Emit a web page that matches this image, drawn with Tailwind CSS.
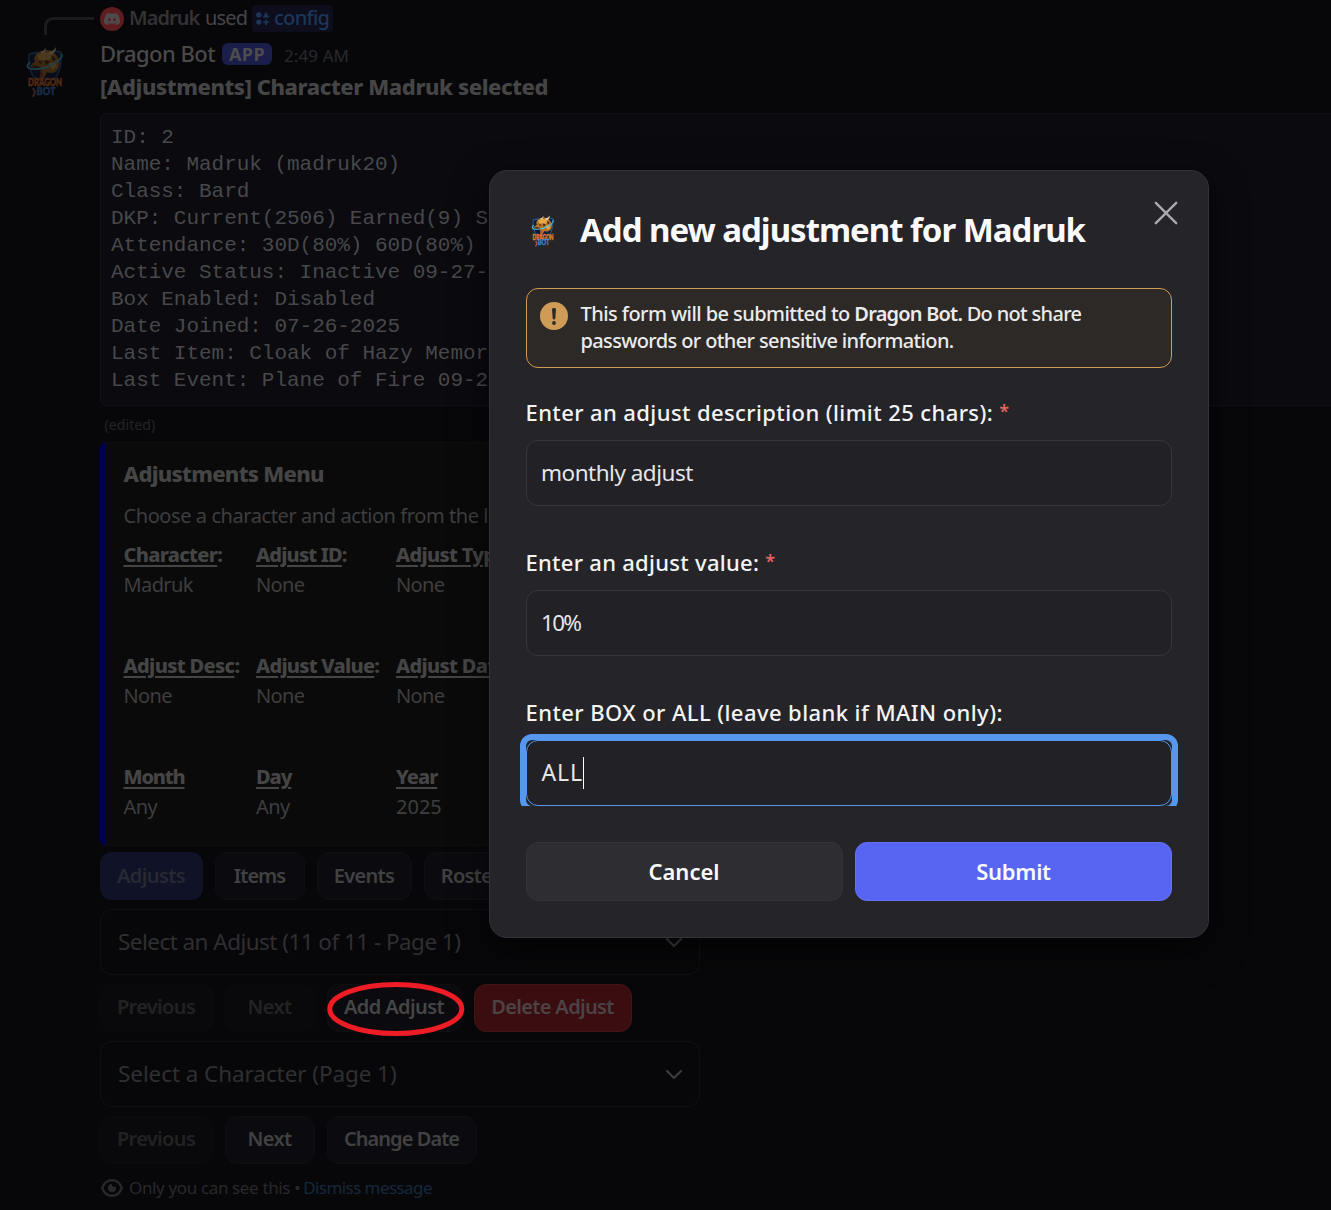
<!DOCTYPE html>
<html lang="en">
<head>
<meta charset="utf-8">
<title>Dragon Bot</title>
<script src="https://cdn.jsdelivr.net/npm/@tailwindcss/browser@4"></script>
</head>
<body class="overflow-hidden bg-[#070709] font-['Noto_Sans','Open_Sans',sans-serif]">
<svg width="0" height="0" class="absolute">
  <defs>
    <symbol id="dragon" viewBox="0 0 38 52">
      <path d="M3 8 L12 6 M28 5 L35 6 Q36 24 29 33 L9 33 Q2 24 3 8Z" fill="#0d1c3f" stroke="#2b5a94" stroke-width="1.6"/>
      <path d="M8 12 Q10 6 17 5 Q24 2 30 9 Q36 15 32 23 Q28 29 21 26 L18 32 L14 33 L15 24 L5 21 Q4 18 9 16Z" fill="#b87426"/>
      <path d="M11 9 Q19 4 27 9 L24 14 L13 14Z M23 17 Q30 16 31 21 L26 24Z" fill="#e6a848"/>
      <path d="M14 5 Q18 6 20 1 Q20 6 17 8 M22 6 Q27 6 30 1 Q30 7 25 9" fill="#e8d3a0"/>
      <path d="M6 19 L15 21 L14 25 L9 24Z M19 14 L24 16 L20 19Z M12 15 L17 16 L14 18Z M25 9 L30 13 L27 15Z" fill="#4a2413"/>
      <path d="M4 16 Q-2 22 6 23 Q18 24 29 17 Q38 11 35 8" fill="none" stroke="#4fc4dc" stroke-width="1.7"/>
      <path d="M15 25 Q18 30 13 34" fill="none" stroke="#b8472a" stroke-width="2.4"/>
      <text x="19" y="40" text-anchor="middle" textLength="34" lengthAdjust="spacingAndGlyphs" font-family="Lato, sans-serif" font-weight="900" font-size="10.5" fill="#f0772a" stroke="#f0772a" stroke-width=".5">DRAGON</text>
      <text x="20" y="48.5" text-anchor="middle" textLength="19" lengthAdjust="spacingAndGlyphs" font-family="Lato, sans-serif" font-weight="900" font-size="10.5" fill="#3f7fd0" stroke="#3f7fd0" stroke-width=".5">BOT</text>
      <path d="M7 42 L9 46 L7 51" fill="none" stroke="#a05a4c" stroke-width="2.2"/>
    </symbol>
  </defs>
</svg>

<main class="relative h-[1210px] w-[1331px] overflow-hidden whitespace-nowrap">
  <div class="flex">
    <!-- gutter: reply spine and avatar -->
    <aside class="flex w-[100px] shrink-0 flex-col">
      <svg class="h-[45px] w-[100px]" viewBox="0 0 100 45" fill="none" stroke="#1b1b1d" stroke-width="3"><path d="M45.5 35V27Q45.5 18.5 54 18.5H94"/></svg>
      <svg class="ml-[26px] h-[54px] w-[38px] opacity-30"><use href="#dragon"/></svg>
    </aside>

    <section class="flex w-[1260px] shrink-0 flex-col pt-[5px]">
      <div class="flex h-[27px] items-center text-[20px] leading-[27px]">
        <span class="flex size-6 items-center justify-center rounded-full bg-[#5f1c20]">
          <svg class="size-4" viewBox="0 0 24 24" fill="#4b4b4c"><path d="M20.317 4.3698a19.7913 19.7913 0 00-4.8851-1.5152.0741.0741 0 00-.0785.0371c-.211.3753-.4447.8648-.6083 1.2495-1.8447-.2762-3.68-.2762-5.4868 0-.1636-.3933-.4058-.8742-.6177-1.2495a.077.077 0 00-.0785-.037 19.7363 19.7363 0 00-4.8852 1.515.0699.0699 0 00-.0321.0277C.5334 9.0458-.319 13.5799.0992 18.0578a.0824.0824 0 00.0312.0561c2.0528 1.5076 4.0413 2.4228 5.9929 3.0294a.0777.0777 0 00.0842-.0276c.4616-.6304.8731-1.2952 1.226-1.9942a.076.076 0 00-.0416-.1057c-.6528-.2476-1.2743-.5495-1.8722-.8923a.077.077 0 01-.0076-.1277c.1258-.0943.2517-.1923.3718-.2914a.0743.0743 0 01.0776-.0105c3.9278 1.7933 8.18 1.7933 12.0614 0a.0739.0739 0 01.0785.0095c.1202.099.246.1981.3728.2924a.077.077 0 01-.0066.1276 12.2986 12.2986 0 01-1.873.8914.0766.0766 0 00-.0407.1067c.3604.698.7719 1.3628 1.225 1.9932a.076.076 0 00.0842.0286c1.961-.6067 3.9495-1.5219 6.0023-3.0294a.077.077 0 00.0313-.0552c.5004-5.177-.8382-9.6739-3.5485-13.6604a.061.061 0 00-.0312-.0286zM8.02 15.3312c-1.1825 0-2.1569-1.0857-2.1569-2.419 0-1.3332.9555-2.4189 2.157-2.4189 1.2108 0 2.1757 1.0952 2.1568 2.419 0 1.3332-.9555 2.4189-2.1569 2.4189zm7.9748 0c-1.1825 0-2.1569-1.0857-2.1569-2.419 0-1.3332.9554-2.4189 2.1569-2.4189 1.2108 0 2.1757 1.0952 2.1568 2.419 0 1.3332-.946 2.4189-2.1568 2.4189Z"/></svg>
        </span>
        <span class="ml-1 w-[77px] pb-0.5 pl-px font-semibold tracking-[-0.95px] text-[#333335]">Madruk</span>
        <span class="w-[47px] pb-0.5 tracking-[-0.85px] text-[#454547]">used</span>
        <span class="flex h-[27px] w-[81px] items-center rounded bg-[#0d0d1b] pl-1 text-[#1c3658]">
          <svg class="size-[13px]" viewBox="0 0 13 13" fill="currentColor"><circle cx="2.8" cy="2.9" r="2.7"/><path d="M10 .3 12.8 5.3H7.2Z" stroke="currentColor" stroke-width=".6" stroke-linejoin="round"/><circle cx="2.8" cy="10.1" r="2.7"/><path d="M9.2 7.4h1.7v1.9h1.9V11h-1.9v1.9H9.2V11H7.3V9.3h1.9Z"/></svg>
          <span class="ml-[5px] pb-0.5 font-medium tracking-[-0.7px]">config</span>
        </span>
      </div>

      <div class="flex h-[44px] items-center">
        <span class="w-[122px] pb-0.5 text-[22px] font-medium tracking-[-0.52px] text-[#49494a]">Dragon Bot</span>
        <span class="flex h-[22px] w-[50px] items-center justify-center rounded-md bg-[#1b1d4a] text-[18px] font-bold tracking-[0.4px] text-[#4c4c4e]">APP</span>
        <span class="ml-3 pt-1 text-[17px] tracking-[0.1px] text-[#29292b]">2:49 AM</span>
      </div>
      <div class="-mt-px h-[22px] text-[22px] leading-[22px] font-extrabold tracking-[-0.42px] text-[#454546]">[Adjustments] Character Madruk selected</div>

      <pre class="mt-4 h-[293px] rounded-md border border-[#111116] bg-[#0a0a0f] pt-2.5 pl-2.5 font-['Liberation_Mono',monospace] text-[21px] leading-[27px] tracking-[-0.03px] text-[#48484a]">ID: 2
Name: Madruk (madruk20)
Class: Bard
DKP: Current(2506) Earned(9) Spent(0)
Attendance: 30D(80%) 60D(80%) 90D(80%)
Active Status: Inactive 09-27-2025
Box Enabled: Disabled
Date Joined: 07-26-2025
Last Item: Cloak of Hazy Memories
Last Event: Plane of Fire 09-27-2025</pre>
      <div class="mt-[7px] h-6 pl-[4.5px] text-[14px] leading-6 tracking-[0.1px] text-[#242426]">(edited)</div>

      <article class="mt-[5px] h-[404px] w-[648px] rounded-[6px] border border-l-[6px] border-[#0f0f10] border-l-[#00004f] bg-[#0a0a0a] pl-[17.5px] text-[20px] text-[#3e3e3f]">
        <h2 class="mt-4 h-7 text-[22px] leading-7 font-extrabold tracking-[-0.7px] text-[#454546]">Adjustments Menu</h2>
        <p class="mt-[15px] h-7 leading-7 tracking-[-0.42px]">Choose a character and action from the list</p>
        <div class="mt-[10px] grid grid-cols-[132.5px_140px_1fr] gap-y-[51px] leading-[30px] tracking-[-0.6px]">
          <div><b class="block font-extrabold tracking-[-0.7px] text-[#454546]"><u class="decoration-2 underline-offset-[3px]">Character</u>:</b>Madruk</div>
          <div><b class="block font-extrabold tracking-[-0.85px] text-[#454546]"><u class="decoration-2 underline-offset-[3px]">Adjust ID</u>:</b>None</div>
          <div><b class="block font-extrabold tracking-[-0.7px] text-[#454546]"><u class="decoration-2 underline-offset-[3px]">Adjust Type</u>:</b>None</div>
          <div><b class="block font-extrabold tracking-[-0.65px] text-[#454546]"><u class="decoration-2 underline-offset-[3px]">Adjust Desc</u>:</b>None</div>
          <div><b class="block font-extrabold tracking-[-0.75px] text-[#454546]"><u class="decoration-2 underline-offset-[3px]">Adjust Value</u>:</b>None</div>
          <div><b class="block font-extrabold tracking-[-0.7px] text-[#454546]"><u class="decoration-2 underline-offset-[3px]">Adjust Date</u>:</b>None</div>
          <div><b class="block font-extrabold tracking-[-1.2px] text-[#454546]"><u class="decoration-2 underline-offset-[3px]">Month</u></b>Any</div>
          <div><b class="block font-extrabold tracking-[-1.1px] text-[#454546]"><u class="decoration-2 underline-offset-[3px]">Day</u></b>Any</div>
          <div><b class="block font-extrabold tracking-[-1px] text-[#454546]"><u class="decoration-2 underline-offset-[3px]">Year</u></b><span class="tracking-[0px]">2025</span></div>
        </div>
      </article>

      <div class="mt-1.5 flex h-12 gap-3 text-[20px] font-semibold text-[#414142]">
        <div class="flex w-[103px] items-center justify-center rounded-xl bg-[#101227] pr-px tracking-[-0.6px] text-[#272932]">Adjusts</div>
        <div class="flex w-[90px] items-center justify-center rounded-xl border border-[#0f0f12] bg-[#0b0b0f] pr-px pb-px tracking-[-1px]">Items</div>
        <div class="flex w-[95px] items-center justify-center rounded-xl border border-[#0f0f12] bg-[#0b0b0f] pr-px pb-px tracking-[-0.7px]">Events</div>
        <div class="flex w-[102px] items-center justify-center rounded-xl border border-[#0f0f12] bg-[#0b0b0f] pb-px tracking-[-0.7px]">Rosters</div>
      </div>

      <div class="mt-[9px] flex h-[66px] w-[600px] items-center justify-between rounded-xl border border-[#101012] pr-[17.5px] pl-[17px] text-[22.5px] text-[#2f2f31]">
        <span class="tracking-[-0.54px]">Select an Adjust (11 of 11 - Page 1)</span>
        <svg class="h-[9px] w-4 text-[#3d3d3e]" viewBox="0 0 16 9" fill="none" stroke="currentColor" stroke-width="2" stroke-linecap="round" stroke-linejoin="round"><path d="m1 1 7 7 7-7"/></svg>
      </div>

      <div class="mt-[9px] flex h-12 gap-3 text-[20px] font-semibold text-[#454546]">
        <div class="flex w-[113px] items-center justify-center rounded-xl border border-[#0b0b0d] bg-[#09090b] pr-px pb-0.5 tracking-[-0.65px] text-[#222224]">Previous</div>
        <div class="flex w-[90px] items-center justify-center rounded-xl border border-[#0b0b0d] bg-[#09090b] pr-px pb-0.5 tracking-[-0.65px] text-[#222224]">Next</div>
        <div class="relative flex w-[135px] items-center justify-center rounded-xl border border-[#0f0f12] bg-[#0b0b0f] pr-px pb-0.5 tracking-[-0.6px]">Add Adjust
          <svg class="absolute -top-[3px] -left-px h-[54px] w-[138px]" viewBox="0 0 138 54" fill="none" stroke="#ee1c24" stroke-width="5"><ellipse cx="68.8" cy="27" rx="66" ry="24.5"/></svg>
        </div>
        <div class="flex w-[158px] items-center justify-center rounded-xl border border-[#451318] bg-[#3a0d11] pr-px pb-0.5 tracking-[-0.65px] text-[#4b4344]">Delete Adjust</div>
      </div>

      <div class="mt-[9px] flex h-[66px] w-[600px] items-center justify-between rounded-xl border border-[#101012] pr-[17.5px] pl-[17px] text-[22.5px] text-[#2f2f31]">
        <span class="tracking-[-0.08px]">Select a Character (Page 1)</span>
        <svg class="h-[9px] w-4 text-[#3d3d3e]" viewBox="0 0 16 9" fill="none" stroke="currentColor" stroke-width="2" stroke-linecap="round" stroke-linejoin="round"><path d="m1 1 7 7 7-7"/></svg>
      </div>

      <div class="mt-[9px] flex h-12 gap-3 text-[20px] font-semibold text-[#414142]">
        <div class="flex w-[113px] items-center justify-center rounded-xl border border-[#0b0b0d] bg-[#09090b] pr-px pb-0.5 tracking-[-0.65px] text-[#222224]">Previous</div>
        <div class="flex w-[90px] items-center justify-center rounded-xl border border-[#0f0f12] bg-[#0b0b0f] pr-px pb-0.5 tracking-[-0.65px]">Next</div>
        <div class="flex w-[150px] items-center justify-center rounded-xl border border-[#0f0f12] bg-[#0b0b0f] pr-px pb-0.5 tracking-[-0.95px]">Change Date</div>
      </div>

      <div class="mt-3 flex h-6 items-center text-[17px] text-[#29292b]">
        <svg class="ml-px h-[18px] w-[22px]" viewBox="0 0 22 18" fill="none"><path d="M1.2 9C3 4.2 6.6 1.2 11 1.2S19 4.2 20.8 9C19 13.800 15.400 16.800 11 16.800S3 13.800 1.200 9Z" stroke="currentColor" stroke-width="2.2" stroke-linejoin="round"/><path d="M11 5a4 4 0 1 0 4 4 4 4 0 0 0-.4-1.700 2.200 2.200 0 0 1-3.600-2.300Z" fill="currentColor"/></svg>
        <span class="ml-1.5 tracking-[-0.36px]">Only you can see this</span>
        <span class="mr-[3px] ml-1 w-[6px] text-center">•</span>
        <span class="tracking-[-0.56px] text-[#16273d]">Dismiss message</span>
      </div>
    </section>
  </div>

  <!-- dialog -->
  <div class="absolute top-[170px] left-[489px] flex h-[768px] w-[720px] flex-col rounded-[18px] border border-[#323237] bg-[#242429] text-[#f4f4f5] shadow-[0_12px_36px_rgba(0,0,0,0.5)]">
    <svg class="absolute top-[30px] right-[30px] size-6" viewBox="0 0 24 24" fill="none" stroke="#aaaaae" stroke-width="2.4" stroke-linecap="round"><path d="m1.800 1.800 20.400 20.400M22.200 1.800 1.800 22.200"/></svg>
    <header class="flex h-[117px] items-center pl-[41px]">
      <svg class="mt-0.5 h-[32px] w-[24px]"><use href="#dragon"/></svg>
      <h1 class="ml-[25px] text-[33px] font-bold tracking-[-1.02px] text-[#fafafb]">Add new adjustment for Madruk</h1>
    </header>
    <div class="flex h-[518px] flex-col overflow-hidden px-9">
      <div class="flex h-20 shrink-0 rounded-xl border border-[#cf9c57] bg-[#2d2927] pt-[11px] pl-[13px] text-[20px] leading-[27px] font-medium text-[#ebebec]">
        <svg class="mt-0.5 size-7 shrink-0" viewBox="0 0 28 28"><circle cx="14" cy="14" r="14" fill="#cf9c57"/><path d="M12 7.300Q12 6 14 6T16 7.300L15.300 16.500Q15.200 17.500 14 17.500T12.700 16.500Z" fill="#2d2927"/><circle cx="14" cy="21" r="1.900" fill="#2d2927"/></svg>
        <p class="ml-[12.5px]"><span class="tracking-[-0.56px]">This form will be submitted to </span><b class="font-semibold tracking-[-0.8px]">Dragon Bot.</b><span class="tracking-[-0.68px]"> Do not share</span><br><span class="tracking-[-0.63px]">passwords or other sensitive information.</span></p>
      </div>
      <label class="-ml-px mt-[30px] h-7 shrink-0 pl-[0.5px] text-[22px] leading-7 font-medium tracking-[0.4px]">Enter an adjust description (limit 25 chars): <span class="align-[3px] text-[18px] leading-none font-semibold text-[#e0625f]">*</span></label>
      <div class="mt-3.5 flex h-[66px] shrink-0 items-center rounded-xl border border-[#36363b] bg-[#212126] pl-[14px] text-[22.5px] tracking-[-0.5px] text-[#e6e6e8]">monthly adjust</div>
      <label class="-ml-px mt-[42px] h-7 shrink-0 pl-[0.5px] text-[22px] leading-7 font-medium tracking-[0.28px]">Enter an adjust value: <span class="align-[3px] text-[18px] leading-none font-semibold text-[#e0625f]">*</span></label>
      <div class="mt-3.5 flex h-[66px] shrink-0 items-center rounded-xl border border-[#36363b] bg-[#212126] pl-[14px] text-[22.5px] tracking-[-1.7px] text-[#e6e6e8]">10%</div>
      <label class="-ml-px mt-[42px] h-7 shrink-0 pl-[0.5px] text-[22px] leading-7 font-medium tracking-[0.42px]">Enter BOX or ALL (leave blank if MAIN only):</label>
      <div class="relative mt-3.5 flex h-[66px] shrink-0 items-center rounded-xl border border-[#5598ee] bg-[#212126] pl-[14.5px] text-[23px] tracking-[0.9px] text-[#e6e6e8]">
        <span class="absolute -inset-[7px] rounded-[12px] border-[6px] border-[#5598ee]"></span>
        <span class="pb-0.5">ALL</span><span class="h-8 w-px bg-white"></span>
      </div>
    </div>
    <footer class="mt-9 grid h-[59px] grid-cols-2 gap-3 px-9 text-[22px] font-semibold text-[#fafafb]">
      <div class="flex items-center justify-center rounded-xl border border-[#333338] bg-[#2d2d32] pr-px">Cancel</div>
      <div class="flex items-center justify-center rounded-xl border border-[#6671f4] bg-[#5865f2] tracking-[-0.3px]">Submit</div>
    </footer>
  </div>
</main>
</body>
</html>
